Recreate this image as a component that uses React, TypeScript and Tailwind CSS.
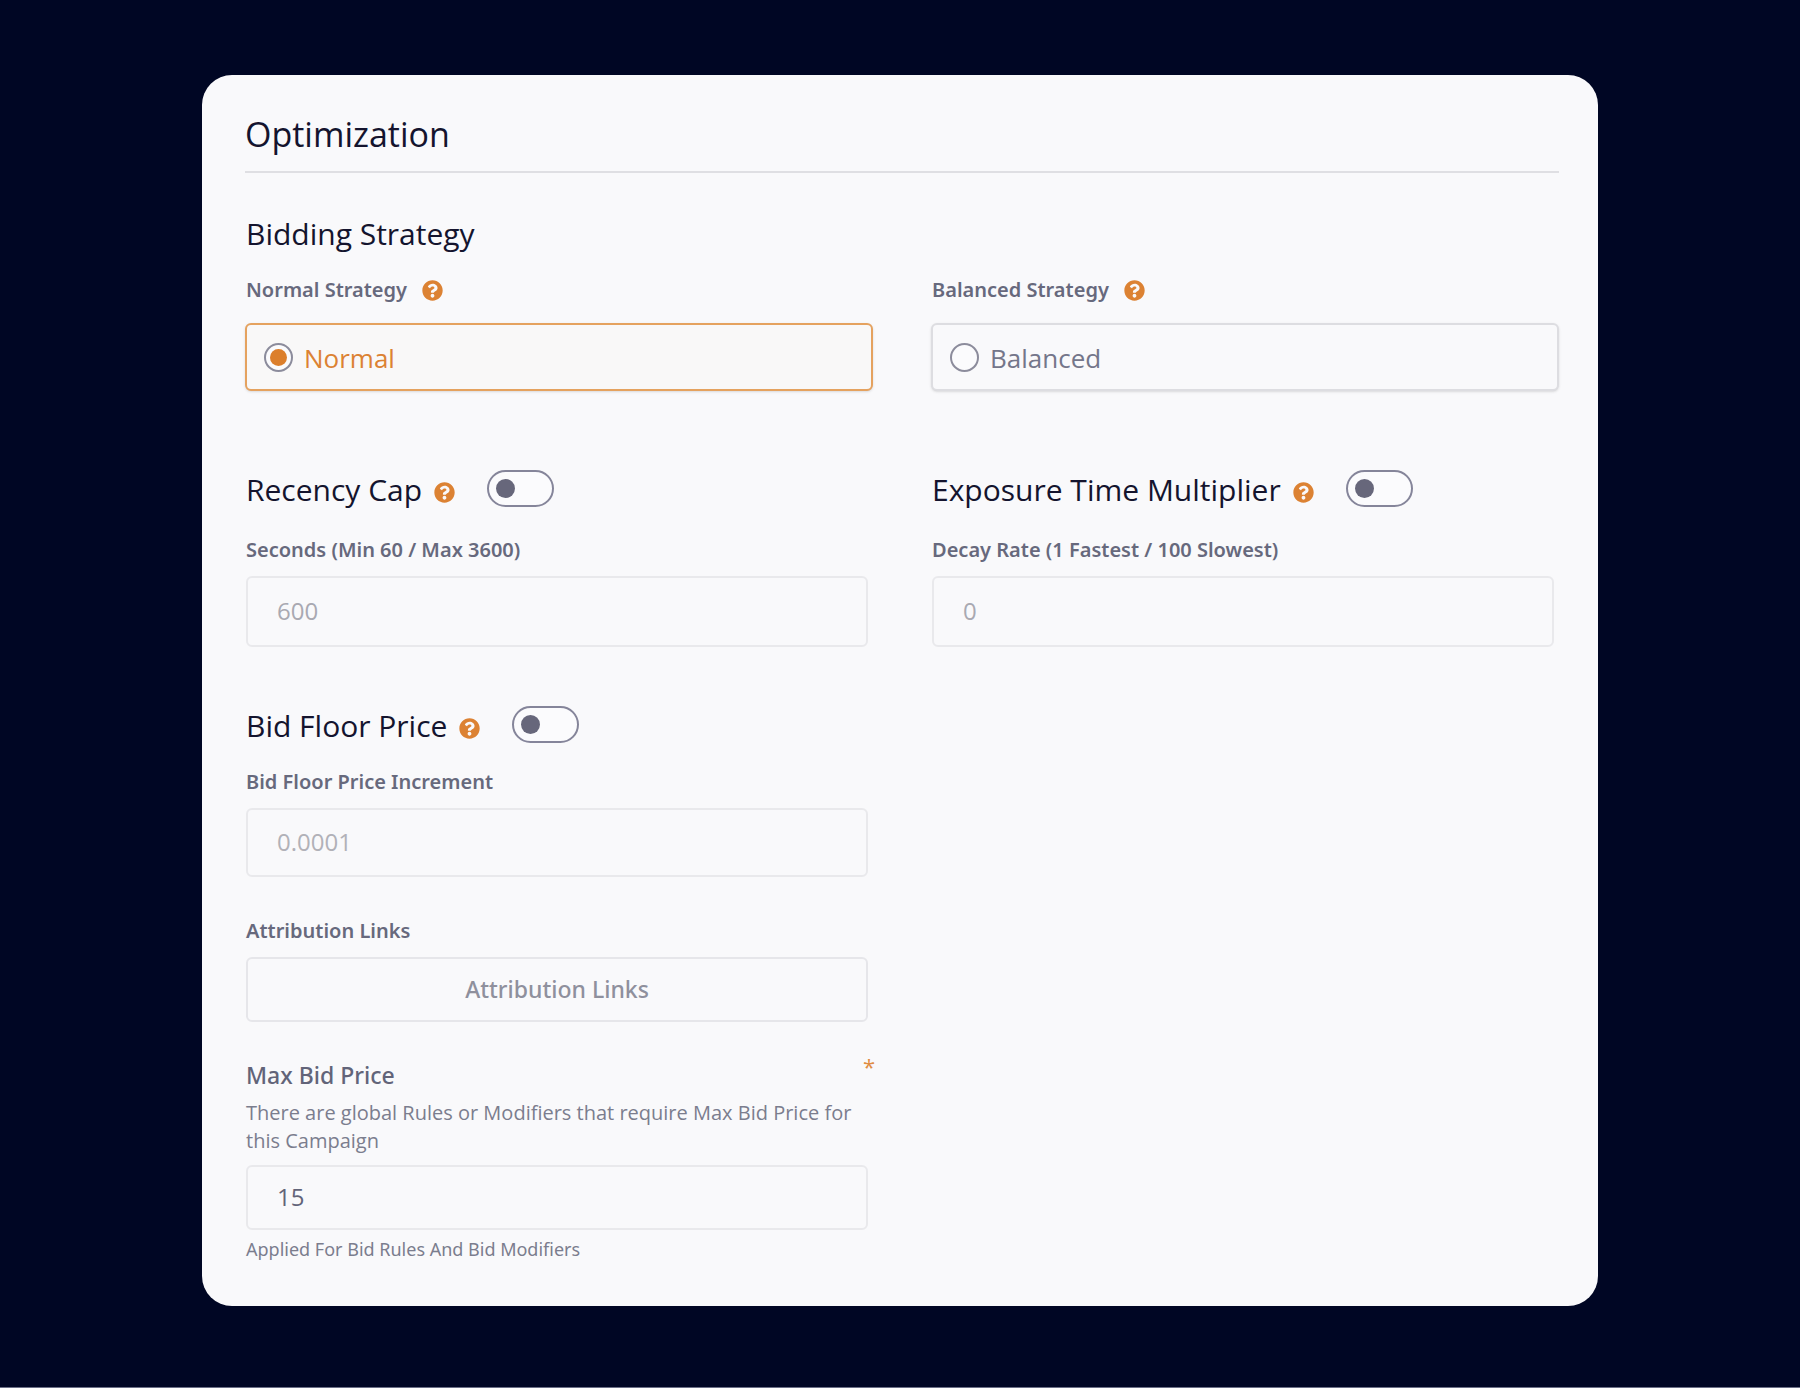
import { useState } from 'react';
import type { ReactNode } from 'react';
import { FaQuestionCircle } from 'react-icons/fa';

const labelClass = "font-['Noto_Sans',sans-serif] text-[20px] leading-7 font-semibold text-[#67697d]";
const fieldClass = 'block w-full rounded-md border-2 border-[#e9e9ec] bg-[#f9f9fb] px-[29px] pb-0.5 text-[24px]';

const Help = ({ about }: { about: string }) => (
    <button type="button" aria-label={`Help: ${about}`} className="text-[#dc8233]">
        <FaQuestionCircle size={21} />
    </button>
);

type StrategyProps = {
    value: string;
    selected: string;
    onSelect: (value: string) => void;
};

const Strategy = ({ value, selected, onSelect }: StrategyProps) => {
    const active = value === selected;

    return (
        <div>
            <div className={`flex items-center gap-[15px] pl-px ${labelClass}`}>
                <span>{value} Strategy</span>
                <Help about={`${value} Strategy`} />
            </div>
            <label
                className={`mt-[19px] flex h-[68px] items-center gap-[11px] rounded-md border-2 px-[17px] text-[26px] shadow-sm ${active ? 'border-[#e5a25f] bg-[#f9f8f8] text-[#dc8233]' : 'border-[#dddde1] bg-[#f9f9fb] text-[#74768a]'}`}
            >
                <input
                    type="radio"
                    name="strategy"
                    value={value}
                    checked={active}
                    onChange={() => onSelect(value)}
                    className="grid size-[29px] appearance-none place-content-center rounded-full border-2 border-[#8c8c9c] bg-[#fbfbfd] before:size-[17px] before:rounded-full checked:before:bg-[#dc7f2c]"
                />
                <span className="pt-0.5">{value}</span>
            </label>
        </div>
    );
};

const ToggleHeading = ({ title }: { title: string }) => (
    <div className="flex h-10 items-start pl-px">
        <h3 className="text-[30px] leading-10 text-[#14142e]">{title}</h3>
        <div className="mt-3 ml-3 flex">
            <Help about={title} />
        </div>
        <input
            type="checkbox"
            role="switch"
            aria-label={title}
            className="ml-8 flex h-[37px] w-[67px] appearance-none items-center rounded-full border-2 border-[#85859a] bg-[#fbfbfd] px-[7px] before:size-[19px] before:rounded-full before:bg-[#67677b] checked:justify-end"
        />
    </div>
);

const FieldLabel = ({ id, children }: { id: string; children: ReactNode }) => (
    <label htmlFor={id} className={`mb-3 block ${labelClass}`}>
        {children}
    </label>
);

const App = () => {
    const [strategy, setStrategy] = useState('Normal');

    return (
        <main className="min-h-screen border-b border-[#6b6f87] bg-[#000624] px-6 py-[75px] font-['Open_Sans',sans-serif]">
            <form className="mx-auto w-full max-w-[1396px] rounded-[30px] bg-[#f9f9fb] pt-9 pr-[39px] pb-[43px] pl-[43px]">
                <h1 className="border-b-2 border-[#dfdfe3] pt-px pb-[15px] text-[34px] leading-[44px] text-[#14142e]">Optimization</h1>

                <h2 className="mt-[41px] pl-px text-[30px] leading-10 text-[#14142e]">Bidding Strategy</h2>
                <div className="mt-[22px] grid grid-cols-2 gap-x-[58px]">
                    <Strategy value="Normal" selected={strategy} onSelect={setStrategy} />
                    <Strategy value="Balanced" selected={strategy} onSelect={setStrategy} />
                </div>

                <div className="mt-[79px] grid grid-cols-2 gap-x-[58px]">
                    <section>
                        <ToggleHeading title="Recency Cap" />
                        <div className="mt-[26px] pr-[5px] pl-px">
                            <FieldLabel id="seconds">Seconds (Min 60 / Max 3600)</FieldLabel>
                            <input id="seconds" defaultValue="600" className={`${fieldClass} h-[71px] text-[#a9a9b2]`} />
                        </div>
                    </section>
                    <section>
                        <ToggleHeading title="Exposure Time Multiplier" />
                        <div className="mt-[26px] pr-[5px] pl-px">
                            <FieldLabel id="decay">Decay Rate (1 Fastest / 100 Slowest)</FieldLabel>
                            <input id="decay" defaultValue="0" className={`${fieldClass} h-[71px] text-[#a9a9b2]`} />
                        </div>
                    </section>
                </div>

                <div className="mt-[59px] grid grid-cols-2 gap-x-[58px]">
                    <section>
                        <ToggleHeading title="Bid Floor Price" />
                        <div className="mt-[22px] pr-[5px] pl-px">
                            <FieldLabel id="increment">Bid Floor Price Increment</FieldLabel>
                            <input id="increment" defaultValue="0.0001" className={`${fieldClass} h-[69px] text-[#b1b1b8]`} />
                        </div>

                        <div className="mt-10 pr-[5px] pl-px">
                            <FieldLabel id="attribution">Attribution Links</FieldLabel>
                            <button
                                id="attribution"
                                type="button"
                                className="h-[65px] w-full rounded-md border-2 border-[#e6e6ea] font-['Noto_Sans',sans-serif] text-[23px] font-medium text-[#8f909d]"
                            >
                                Attribution Links
                            </button>
                        </div>

                        <div className="mt-9 -mr-0.5 flex items-start justify-between pl-px">
                            <label htmlFor="max-bid" className="pt-px font-['Noto_Sans',sans-serif] text-[23px] leading-8 font-medium text-[#626479]">
                                Max Bid Price
                            </label>
                            <span className="text-[22px] leading-4 text-[#e08c42]">*</span>
                        </div>
                        <p className="mt-2 pl-px text-[20px] leading-7 text-[#7b7d8e]">
                            There are global Rules or Modifiers that require Max Bid Price for this Campaign
                        </p>
                        <div className="mt-[10px] pr-[5px] pl-px">
                            <input id="max-bid" defaultValue="15" className={`${fieldClass} h-[65px] text-[#626479]`} />
                        </div>
                        <p className="mt-[5px] pl-px font-['Noto_Sans',sans-serif] text-[18px] leading-7 text-[#7b7d8e]">
                            Applied For Bid Rules And Bid Modifiers
                        </p>
                    </section>
                </div>
            </form>
        </main>
    );
};

export default App;
